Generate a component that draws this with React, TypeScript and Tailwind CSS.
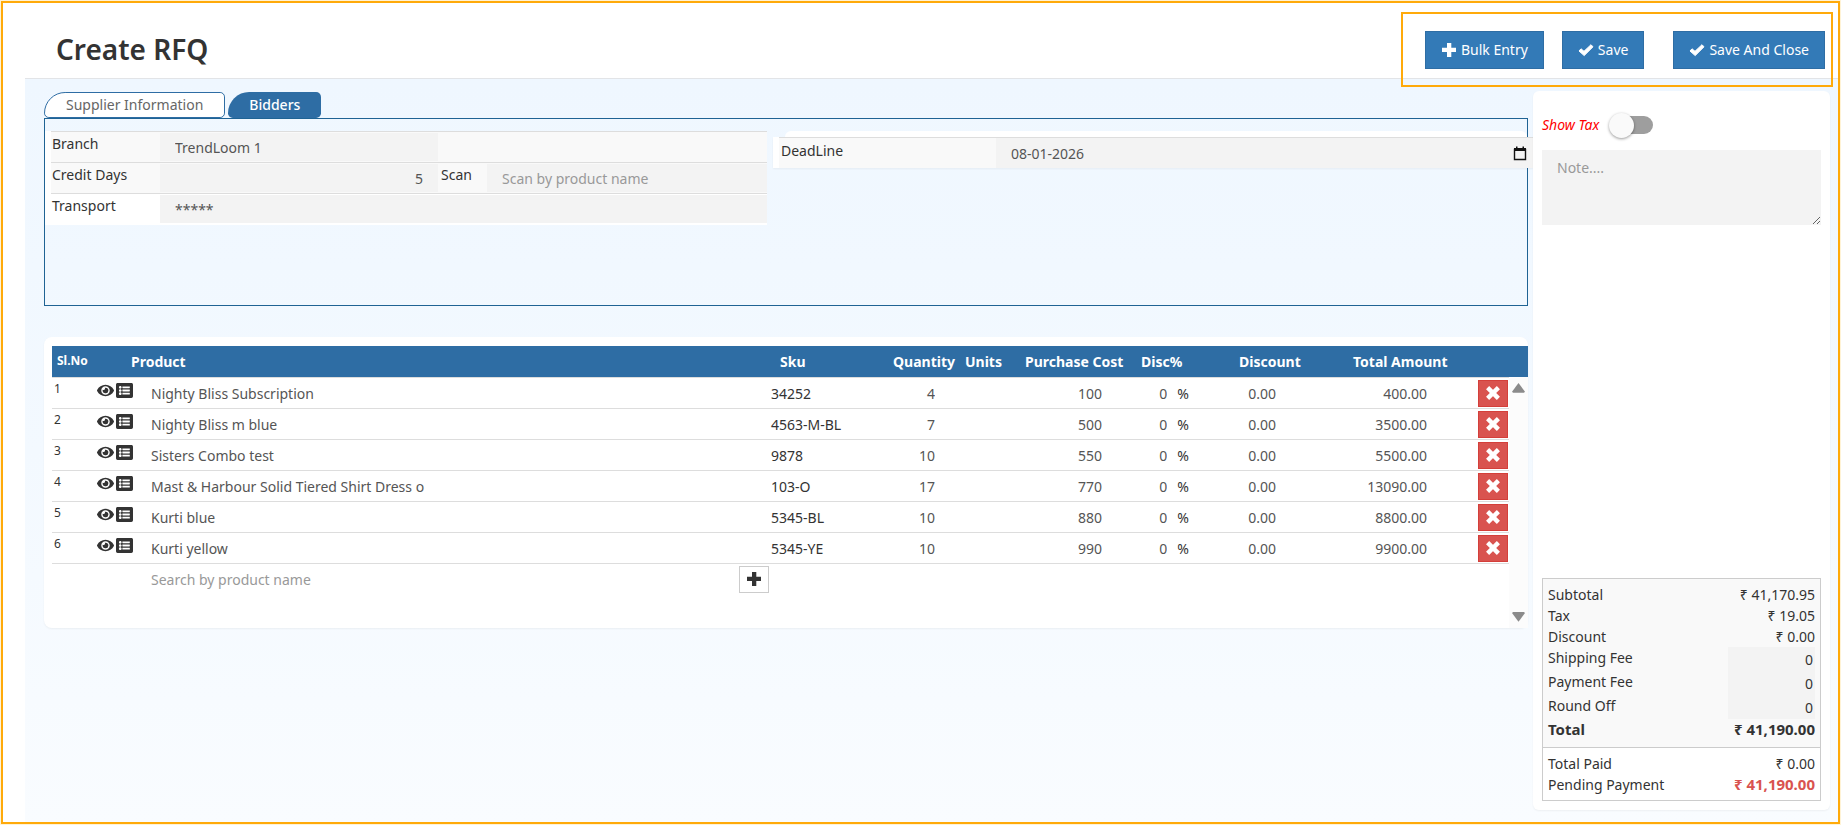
import { useState } from 'react';
import { FaEye, FaListAlt } from 'react-icons/fa';

interface Item {
  name: string;
  sku: string;
  qty: string;
  cost: string;
  total: string;
}

const items: Item[] = [
  { name: 'Nighty Bliss Subscription', sku: '34252', qty: '4', cost: '100', total: '400.00' },
  { name: 'Nighty Bliss m blue', sku: '4563-M-BL', qty: '7', cost: '500', total: '3500.00' },
  { name: 'Sisters Combo test', sku: '9878', qty: '10', cost: '550', total: '5500.00' },
  { name: 'Mast & Harbour Solid Tiered Shirt Dress o', sku: '103-O', qty: '17', cost: '770', total: '13090.00' },
  { name: 'Kurti blue', sku: '5345-BL', qty: '10', cost: '880', total: '8800.00' },
  { name: 'Kurti yellow', sku: '5345-YE', qty: '10', cost: '990', total: '9900.00' },
];

const fees = ['Shipping Fee', 'Payment Fee', 'Round Off'];

function PlusIcon() {
  return (
    <svg viewBox="0 0 16 16" className="size-4" fill="currentColor">
      <path d="M6 1h4.300v4.800H15V10h-4.700v4.900H6V10H1V5.800h5z" />
    </svg>
  );
}

function CheckIcon() {
  return (
    <svg viewBox="0 0 16 16" className="size-4" fill="currentColor" stroke="currentColor" strokeLinejoin="round">
      <path d="M1 9 3 6.800 6 9.300 13 2.700 15 4.800 6.200 13.600z" />
    </svg>
  );
}

function CrossIcon() {
  return (
    <svg viewBox="0 0 16 16" className="size-4" fill="none" stroke="currentColor" strokeWidth="4.400">
      <path d="M2.600 2.600 13.400 13.400M13.400 2.600 2.600 13.400" />
    </svg>
  );
}

function CalendarIcon() {
  return (
    <svg viewBox="0 0 14 15" className="h-[15px] w-3.5" fill="none">
      <path d="M1.5 3.5h11v10h-11z" stroke="#111" strokeWidth="1.4" />
      <path d="M1 2h12v3H1zM3 .5h1.5V2H3zM9.500 .5H11V2H9.500z" fill="#111" />
    </svg>
  );
}

function Header() {
  const button =
    'flex h-[38px] items-center gap-1 border border-[#2e6da4] bg-[#337ab7] px-[15px] text-white cursor-pointer';

  return (
    <header className="flex h-[76px] items-center justify-between border-b border-[#e2e4e7] bg-white pt-[18px] pl-[31px] pr-[13px]">
      <h1 className="pb-0.5 text-[28px] font-semibold text-[#333]">Create RFQ</h1>
      <div className="relative flex">
        <button className={button}>
          <PlusIcon />
          Bulk Entry
        </button>
        <button className={`${button} ml-[18px]`}>
          <CheckIcon />
          Save
        </button>
        <button className={`${button} ml-[29px]`}>
          <CheckIcon />
          Save And Close
        </button>
        <div className="pointer-events-none absolute -left-6 -top-[19px] -bottom-[18px] -right-2 border-2 border-[#ffaa0a]" />
      </div>
    </header>
  );
}

function SupplierPanel() {
  const [tab, setTab] = useState('supplier');
  const field = 'h-7 w-full bg-[#f3f3f3] px-[15px] text-[#555] outline-none placeholder:text-[#999]';
  const label = 'px-px align-top leading-6';

  return (
    <section>
      <div className="flex gap-[3px]">
        <button
          onClick={() => setTab('supplier')}
          className="h-[26px] rounded-md rounded-tl-[26px] border border-[#2e6da4] bg-white px-[21px] leading-6 text-[#666] cursor-pointer"
          aria-pressed={tab === 'supplier'}
        >
          Supplier Information
        </button>
        <button
          onClick={() => setTab('bidders')}
          className="h-[26px] rounded-md rounded-tl-[26px] bg-[#2e6da4] px-[21px] font-medium text-white cursor-pointer"
          aria-pressed={tab === 'bidders'}
        >
          Bidders
        </button>
      </div>
      <div className="flex h-[188px] items-start border border-[#1f6394] pt-3">
        <div className="w-[722px] shrink-0 bg-white pl-1.5">
          <table className="w-full table-fixed">
            <colgroup>
              <col className="w-[109px]" />
              <col className="w-[278px]" />
              <col className="w-[49px]" />
              <col />
            </colgroup>
            <tbody>
              <tr className="h-[31px] border-t border-[#ddd] bg-[#f9f9f9]">
                <td className={label}><label htmlFor="branch">Branch</label></td>
                <td><input id="branch" className={field} defaultValue="TrendLoom 1" /></td>
                <td colSpan={2} />
              </tr>
              <tr className="h-[31px] border-t border-[#ddd] bg-[#f9f9f9]">
                <td className={label}><label htmlFor="credit">Credit Days</label></td>
                <td><input id="credit" className={`${field} text-right`} defaultValue="5" /></td>
                <td className="px-[3px] align-top leading-6"><label htmlFor="scan">Scan</label></td>
                <td><input id="scan" className={field} placeholder="Scan by product name" /></td>
              </tr>
              <tr className="h-[31px] border-t border-[#ddd]">
                <td className={label}><label htmlFor="transport">Transport</label></td>
                <td colSpan={3}><input id="transport" className={field} defaultValue="*****" /></td>
              </tr>
            </tbody>
          </table>
        </div>
        <div className="ml-1.5 -mr-1.5 flex-1">
          <div className="ml-3 mr-1.5 h-1.5 rounded-t-md bg-white" />
          <div className="flex h-[31px] bg-white pl-1.5 shadow-xs">
            <label htmlFor="deadline" className="w-[217px] border-t border-[#ddd] bg-[#f9f9f9] pl-0.5 leading-[26px]">
              DeadLine
            </label>
            <div className="flex flex-1 items-center border-t border-[#ddd] bg-[#f3f3f3] pr-1.5">
              <input id="deadline" className={field} defaultValue="08-01-2026" />
              <button aria-label="Open calendar" className="cursor-pointer">
                <CalendarIcon />
              </button>
            </div>
          </div>
        </div>
      </div>
    </section>
  );
}

function ProductTable() {
  const cell = 'h-[30px] w-full bg-transparent pt-0.5 text-[#555] outline-none';

  return (
    <section className="rounded-lg bg-white pl-2 pt-[9px] shadow-xs">
      <table className="w-full table-fixed">
        <colgroup>
          <col className="w-10" />
          <col />
          <col className="w-[114px]" />
          <col className="w-[75px]" />
          <col className="w-[57px]" />
          <col className="w-[115px]" />
          <col className="w-[69px]" />
          <col className="w-[100px]" />
          <col className="w-[151px]" />
          <col className="w-[57px]" />
          <col className="w-[19px]" />
        </colgroup>
        <thead>
          <tr className="h-[31px] bg-[#2e6da4] text-left font-bold text-white">
            <th className="pl-[5px] text-xs">Sl.No</th>
            <th className="pl-[39px] pt-0.5">Product</th>
            <th className="pl-[9px] pt-0.5">Sku</th>
            <th className="pl-2 pt-0.5">Quantity</th>
            <th className="pl-[5px] pt-0.5">Units</th>
            <th className="pl-2 pt-0.5">Purchase Cost</th>
            <th className="pl-[9px] pt-0.5">Disc%</th>
            <th className="pl-[38px] pt-0.5">Discount</th>
            <th className="pl-[52px] pt-0.5">Total Amount</th>
            <th colSpan={2} />
          </tr>
        </thead>
        <tbody>
          {items.map((item, i) => (
            <tr key={item.sku} className="h-[31px]">
              <td className="border-t border-[#ddd] pl-0.5 align-top text-xs leading-[22px]">{i + 1}</td>
              <td className="border-t border-[#ddd]">
                <div className="flex">
                  <button aria-label={`View ${item.name}`} className="mt-1 ml-[5px] h-4 cursor-pointer">
                    <FaEye className="size-[17px]" />
                  </button>
                  <button aria-label={`Details of ${item.name}`} className="mt-1 ml-0.5 h-4 cursor-pointer">
                    <FaListAlt className="size-[17px]" />
                  </button>
                  <input aria-label="Product" className={`${cell} ml-[18px]`} defaultValue={item.name} />
                </div>
              </td>
              <td className="border-t border-[#ddd] pt-0.5">{item.sku}</td>
              <td className="border-t border-[#ddd] pr-[25px]">
                <input aria-label="Quantity" className={`${cell} text-right`} defaultValue={item.qty} />
              </td>
              <td className="border-t border-[#ddd]" />
              <td className="border-t border-[#ddd] pr-[30px]">
                <input aria-label="Purchase cost" className={`${cell} text-right`} defaultValue={item.cost} />
              </td>
              <td className="border-t border-[#ddd] pr-3">
                <div className="flex items-center gap-2.5">
                  <input aria-label="Discount percent" className={`${cell} text-right`} defaultValue="0" />
                  <span className="pt-0.5">%</span>
                </div>
              </td>
              <td className="border-t border-[#ddd] pr-[25px]">
                <input aria-label="Discount" className={`${cell} text-right`} defaultValue="0.00" />
              </td>
              <td className="border-t border-[#ddd] pr-[25px]">
                <input aria-label="Total amount" className={`${cell} text-right`} defaultValue={item.total} />
              </td>
              <td className="border-t border-[#ddd] pt-px pr-px">
                <button
                  aria-label={`Remove ${item.name}`}
                  className="ml-auto flex h-[27px] w-[30px] items-center justify-center border border-[#d43f3a] bg-[#d9534f] text-white cursor-pointer"
                >
                  <CrossIcon />
                </button>
              </td>
              {i === 0 && (
                <td rowSpan={7} className="h-px bg-[#fcfcfc]">
                  <div className="flex h-full flex-col items-center justify-between py-1.5">
                    <svg viewBox="0 0 12 9" className="w-[13px]" fill="#8b8b8b">
                      <path d="M6 0 12 8 11 9H1L0 8z" />
                    </svg>
                    <svg viewBox="0 0 12 9" className="w-[13px]" fill="#8b8b8b">
                      <path d="M6 9 12 1 11 0H1L0 1z" />
                    </svg>
                  </div>
                </td>
              )}
            </tr>
          ))}
          <tr className="h-[65px] align-top">
            <td className="border-t border-[#ddd]" />
            <td className="border-t border-[#ddd]">
              <div className="flex pl-[59px] pr-0.5">
                <input
                  aria-label="Search product"
                  className={`${cell} placeholder:text-[#999]`}
                  placeholder="Search by product name"
                />
                <button
                  aria-label="Add product"
                  className="mt-0.5 flex h-[27px] w-[30px] shrink-0 items-center justify-center border border-[#ccc] bg-white cursor-pointer"
                >
                  <PlusIcon />
                </button>
              </div>
            </td>
            <td colSpan={8} className="border-t border-[#ddd]" />
          </tr>
        </tbody>
      </table>
    </section>
  );
}

function Sidebar() {
  return (
    <aside className="relative flex w-[297px] shrink-0 flex-col rounded-md bg-white px-[9px] pb-[9px] pt-5 shadow-xs">
      <label className="flex items-center gap-2.5 text-[#f00]">
        <em>Show Tax</em>
        <input type="checkbox" className="peer sr-only" />
        <span className="flex h-7 w-11 items-center">
          <span className="z-10 size-[25px] shrink-0 rounded-full bg-[#fafafa] shadow-[0_1px_3px_#0006]" />
          <span className="-ml-[17px] h-[18px] w-9 shrink-0 rounded-full bg-[#9e9e9e]" />
        </span>
      </label>
      <textarea
        aria-label="Note"
        placeholder="Note...."
        className="mt-[11px] h-[75px] w-full bg-[#f3f3f3] px-[15px] py-2 outline-none placeholder:text-[#999]"
      />

      <dl className="mt-auto border border-[#ccc] leading-[21px]">
        <div className="border-b border-[#ccc] bg-[#f9f9f9] px-[5px] pt-[5px] pb-[7px]">
          <div className="flex justify-between"><dt>Subtotal</dt><dd>₹ 41,170.95</dd></div>
          <div className="flex justify-between"><dt>Tax</dt><dd>₹ 19.05</dd></div>
          <div className="flex justify-between"><dt>Discount</dt><dd>₹ 0.00</dd></div>
          {fees.map((fee) => (
            <div key={fee} className="flex h-6 justify-between">
              <dt><label htmlFor={fee}>{fee}</label></dt>
              <dd>
                <input id={fee} className="h-6 w-[87px] bg-[#f3f3f3] pr-0.5 text-right outline-none" defaultValue="0" />
              </dd>
            </div>
          ))}
          <div className="flex justify-between text-[15px] leading-[21px] font-bold"><dt>Total</dt><dd>₹ 41,190.00</dd></div>
        </div>
        <div className="px-[5px] py-[5px]">
          <div className="flex justify-between"><dt>Total Paid</dt><dd>₹ 0.00</dd></div>
          <div className="flex justify-between">
            <dt>Pending Payment</dt>
            <dd className="text-[15px] leading-[21px] font-bold text-[#d9534f]">₹ 41,190.00</dd>
          </div>
        </div>
      </dl>
    </aside>
  );
}

export default function App() {
  return (
    <div className="flex min-h-screen bg-[#fff3d6] p-px font-['Noto_Sans',sans-serif] text-sm text-[#333]">
      <div className="flex flex-1 flex-col border-2 border-[#ffaa0a] bg-white pl-[22px]">
        <Header />
        <div className="flex flex-1 bg-linear-to-b from-[#eff7ff] via-[#f3f9ff] to-[#f9fcff] pt-3 pb-3 pl-[19px] pr-2">
          <main className="mr-[5px] flex min-w-0 flex-1 flex-col gap-[31px] pt-px">
            <SupplierPanel />
            <ProductTable />
          </main>
          <Sidebar />
        </div>
      </div>
    </div>
  );
}
